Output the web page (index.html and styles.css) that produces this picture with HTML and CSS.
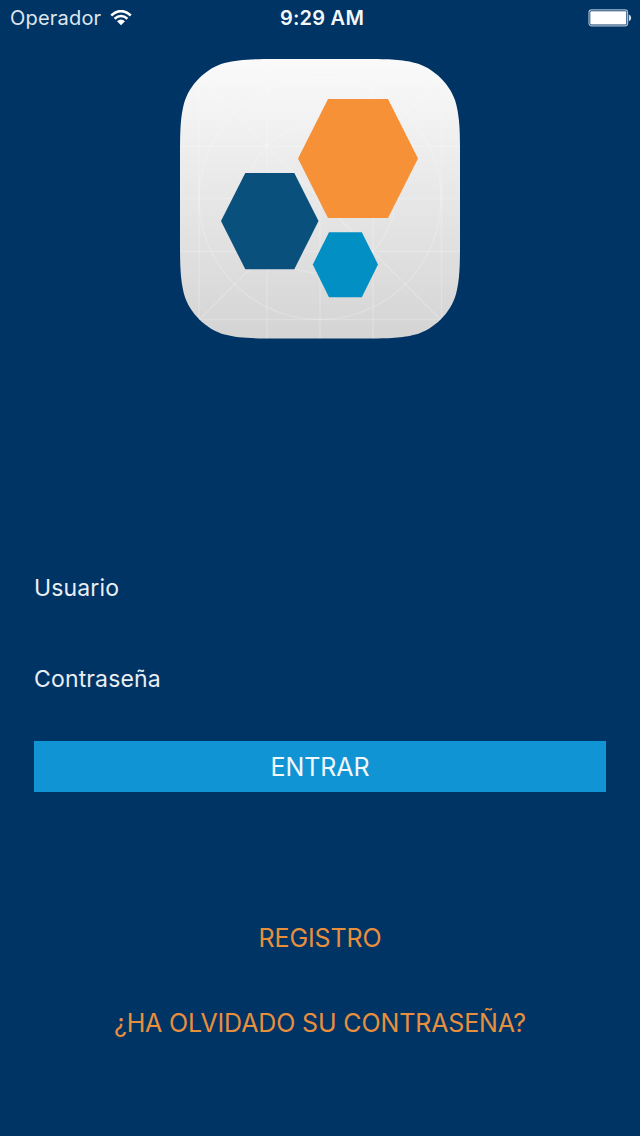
FILE: index.html
```html
<!DOCTYPE html>
<html lang="es">
<head>
  <meta charset="UTF-8">
  <title>Entrar</title>
  <link rel="stylesheet" href="styles.css">
</head>

<body>

  <header class="status-bar">
    <div class="carrier">
      <span class="carrier-name">Operador</span>
      <svg class="wifi" width="22" height="16" viewBox="0 0 22 16">
        <path d="M1.2 5.4 Q11 -3.2 20.8 5.4 M4.6 8.8 Q11 3.2 17.4 8.8" fill="none" stroke="#fff" stroke-width="2.6"/>
        <path d="M7 11.2 Q11 7.8 15 11.2 L11 15.2 Z" fill="#fff"/>
      </svg>
    </div>
    <span class="clock">9:29 AM</span>
    <svg class="battery" width="44" height="18" viewBox="0 0 44 18">
      <rect x="1" y="0.9" width="38.6" height="16" rx="2.6" fill="none" stroke="#a9bace" stroke-width="1.2"/>
      <rect x="2.3" y="2.2" width="36" height="13.4" rx="1" fill="#fff"/>
      <path d="M40.8 5.6 Q43.2 6.2 43.2 8.9 Q43.2 11.6 40.8 12.2 Z" fill="#d5dde6"/>
    </svg>
  </header>

  <main class="login">
    <svg class="logo" width="280" height="280" viewBox="0 0 280 280">
      <defs>
        <linearGradient id="fondo" x1="0" y1="0" x2="0" y2="1">
          <stop offset="0" stop-color="#fafafa"/>
          <stop offset="1" stop-color="#d4d4d4"/>
        </linearGradient>
        <clipPath id="marco">
          <path d="M0 95 C0 70 0.6 58 4 44.5 C9 26 26 9 44.5 4 C58 0.6 70 0 95 0
            H185 C210 0 222 0.6 235.5 4 C254 9 271 26 276 44.5 C279.4 58 280 70 280 95
            V184.5 C280 209.5 279.4 221.5 276 235 C271 253.5 254 270.5 235.5 275.5 C222 278.9 210 279.5 185 279.5
            H95 C70 279.5 58 278.9 44.5 275.5 C26 270.5 9 253.5 4 235 C0.6 221.5 0 209.5 0 184.5 Z"/>
        </clipPath>
      </defs>
      <g clip-path="url(#marco)">
        <rect width="280" height="280" fill="url(#fondo)"/>
        <!-- rejilla -->
        <g fill="none" stroke="#fff" stroke-opacity="0.19" stroke-width="1.5">
          <path d="M19 0 V280 M87 0 V280 M140 0 V280 M193 0 V280 M261.5 0 V280"/>
          <path d="M0 19 H280 M0 87 H280 M0 139.5 H280 M0 192.5 H280 M0 260.5 H280"/>
          <path d="M0 0 L280 280 M280 0 L0 280"/>
          <circle cx="140" cy="139.5" r="121"/>
          <circle cx="140" cy="139.5" r="74.5"/>
        </g>
      </g>
      <polygon points="118,99.5 148,40 208,40 238,99.5 208,159 148,159" fill="#f79138"/>
      <polygon points="41,162 65.3,114 114.3,114 138.5,162 114.3,210.3 65.3,210.3" fill="#0a507c"/>
      <polygon points="132.8,205.5 149,173.2 181.8,173.2 198,205.5 181.8,238.3 149,238.3" fill="#028fc4"/>
    </svg>

    <form class="form">
      <input class="field" type="text" placeholder="Usuario">
      <input class="field" type="password" placeholder="Contraseña">
      <button class="enter" type="button">ENTRAR</button>
    </form>

    <nav class="links">
      <a class="link register">REGISTRO</a>
      <a class="link forgot">¿HA OLVIDADO SU CONTRASEÑA?</a>
    </nav>
  </main>

</body>
</html>
```

FILE: styles.css
```css
* {
  box-sizing: border-box;
}

body {
  margin: 0;
  height: 1136px;
  background-color: #003465;
  color: #fff;
  font-family: Inter, "Liberation Sans", sans-serif;
  overflow: hidden;
}

.status-bar {
  display: grid;
  grid-template-columns: 1fr auto 1fr;
  align-items: center;
  height: 36px;
  padding: 0 8px 0 10px;
}

.carrier {
  display: flex;
  align-items: center;
  gap: 9px;
}

.carrier-name {
  font-size: 20px;
  color: #dfe6ed;
  letter-spacing: 0.2px;
}

.clock {
  padding-left: 2px;
  font-size: 20px;
  font-weight: 600;
  color: #f4f7fa;
  letter-spacing: 0.25px;
}

.battery {
  justify-self: end;
}

.login {
  display: flex;
  flex-direction: column;
  align-items: center;
  padding: 23px 34px 0;
}

.form {
  display: flex;
  flex-direction: column;
  width: 100%;
  margin-top: 219px;
}

.field {
  height: 60px;
  margin-bottom: 31px;
  padding: 0;
  border: none;
  background: none;
  color: #fff;
  font-family: inherit;
  font-size: 23px;
  letter-spacing: 0.15px;
}

.field::placeholder {
  color: #e9eef3;
  opacity: 1;
}

.enter {
  height: 51px;
  margin-top: 1px;
  padding: 0;
  border: none;
  background-color: #1194d3;
  color: #f1f8fc;
  font-family: inherit;
  font-size: 25px;
  letter-spacing: -0.1px;
}

.links {
  display: flex;
  flex-direction: column;
  align-items: center;
  gap: 45px;
  margin-top: 126px;
}

.link {
  color: #e88f3e;
  font-size: 25px;
  line-height: 40px;
  letter-spacing: -0.13px;
  white-space: nowrap;
}
```
